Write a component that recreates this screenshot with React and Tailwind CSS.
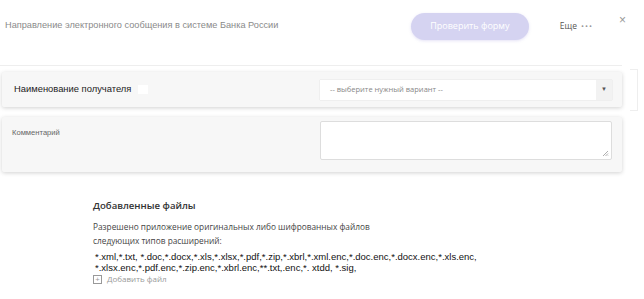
import React from 'react';

const extLine1 = '*.xml,*.txt, *.doc,*.docx,*.xls,*.xlsx,*.pdf,*.zip,*.xbrl,*.xml.enc,*.doc.enc,*.docx.enc,*.xls.enc,';
const extLine2 = '*.xlsx.enc,*.pdf.enc,*.zip.enc,*.xbrl.enc,**.txt,.enc,*. xtdd, *.sig,';

export default function App() {
  return (
    <div className="w-[644px] h-[299px] overflow-hidden bg-white font-['Liberation_Sans',Arial,sans-serif]">
      {/* header */}
      <div className="flex items-center h-[52px] pl-[5px] pr-[18px]">
        <div className="text-[9.2px] text-[#8a8a8a] flex-1">
          Направление электронного сообщения в системе Банка России
        </div>
        <button className="w-[118px] h-[27px] rounded-full bg-[#d5d3f1] text-white text-[9px] font-['Open_Sans',sans-serif] shadow-[0_1px_3px_rgba(150,140,220,0.25)]">
          Проверить форму
        </button>
        <div className="ml-[31px] flex items-center gap-[4px] text-[8.5px] text-[#555] font-['Open_Sans',sans-serif]">
          Еще <span className="text-[#999] tracking-[1px] text-[8px]">•••</span>
        </div>
        <div className="ml-[26px] -mt-[12px] text-[12px] text-[#999] leading-none">×</div>
      </div>

      <div className="mt-[13px] w-[622px] border-t border-[#eeeeee]"></div>

      {/* form rows */}
      <div className="flex">
        <div className="flex flex-col gap-[10px] pl-[2px] pt-[6px] w-[622px]">
          <div className="flex items-center h-[35px] bg-[#f7f7f7] rounded-[2px] shadow-[0_1px_4px_rgba(0,0,0,0.18)] pl-[12px]">
            <div className="flex items-center w-[306px] text-[9.4px] text-[#222]">
              Наименование получателя
              <span className="ml-[7px] w-[10px] h-[9px] bg-white inline-block"></span>
            </div>
            <div className="flex items-stretch w-[292px] h-[20px] bg-white shadow-[0_0_1px_rgba(0,0,0,0.2)]">
              <div className="flex-1 flex items-center pl-[10px] text-[7.5px] text-[#888] font-['Open_Sans',sans-serif]">
                -- выберите нужный вариант --
              </div>
              <div className="w-[16px] bg-[#f2f2f2] flex items-center justify-center text-[6px] text-[#555]">▼</div>
            </div>
          </div>

          <div className="flex items-start h-[55px] bg-[#f7f7f7] rounded-[2px] shadow-[0_1px_4px_rgba(0,0,0,0.18)] pl-[10px] pt-[4px]">
            <div className="w-[308px] pt-[6px] text-[7.6px] text-[#666]">
              Комментарий
            </div>
            <div className="relative w-[292px] h-[39px] bg-white border border-[#dddddd] rounded-[2px]">
              <svg className="absolute right-[2px] bottom-[2px]" width="7" height="7" viewBox="0 0 7 7">
                <path d="M6 1L1 6M6 3.5L3.5 6M6 5.5L5.5 6" stroke="#999" strokeWidth="0.8" />
              </svg>
            </div>
          </div>
        </div>
        <div className="ml-[8px] mt-[3px] w-[8px] h-[42px] border border-l-0 border-[#eeeeee]"></div>
      </div>

      {/* files */}
      <div className="pl-[93px] pt-[25px]">
        <div className="text-[9.6px] font-semibold text-[#333] font-['Open_Sans',sans-serif] leading-[18px]">
          Добавленные файлы
        </div>
        <div className="mt-[5px] text-[8.3px] text-[#444] font-['Open_Sans',sans-serif] leading-[14px]">
          <div>Разрешено приложение оригинальных либо шифрованных файлов</div>
          <div>следующих типов расширений:</div>
        </div>
        <div className="mt-[3px] pl-[2px] text-[9.5px] text-[#111] leading-[11px]">
          <div>{extLine1}</div>
          <div>{extLine2}</div>
        </div>
        <div className="flex items-center gap-[5px] text-[8px] text-[#999] font-['Open_Sans',sans-serif] leading-[12px]">
          <span className="w-[9px] h-[9px] border border-[#999] flex items-center justify-center text-[8px] leading-none">+</span>
          Добавить файл
        </div>
      </div>
    </div>
  );
}
